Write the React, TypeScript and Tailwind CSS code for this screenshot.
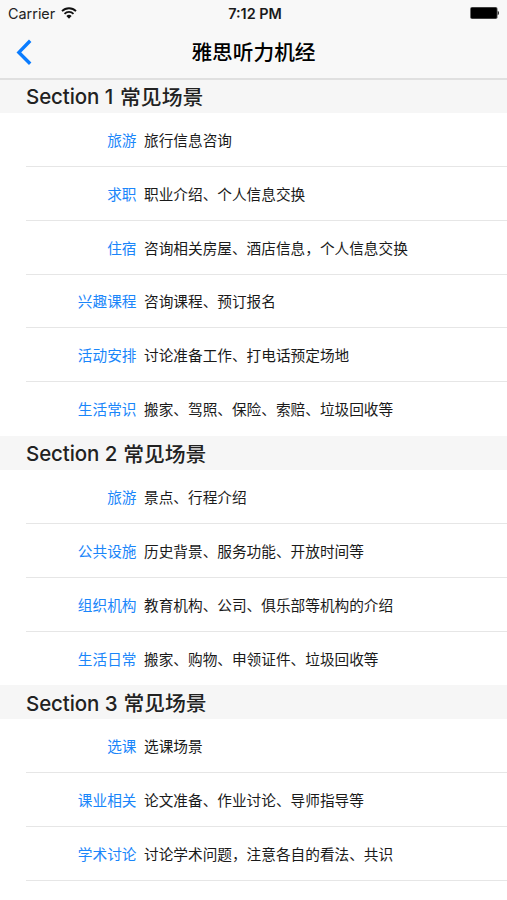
type Row = { label: string; detail: string };
type Section = { title: string; suffix: string; rows: Row[] };

const sections: Section[] = [
  {
    title: "Section 1",
    suffix: "常见场景",
    rows: [
      { label: "旅游", detail: "旅行信息咨询" },
      { label: "求职", detail: "职业介绍、个人信息交换" },
      { label: "住宿", detail: "咨询相关房屋、酒店信息，个人信息交换" },
      { label: "兴趣课程", detail: "咨询课程、预订报名" },
      { label: "活动安排", detail: "讨论准备工作、打电话预定场地" },
      { label: "生活常识", detail: "搬家、驾照、保险、索赔、垃圾回收等" },
    ],
  },
  {
    title: "Section 2",
    suffix: "常见场景",
    rows: [
      { label: "旅游", detail: "景点、行程介绍" },
      { label: "公共设施", detail: "历史背景、服务功能、开放时间等" },
      { label: "组织机构", detail: "教育机构、公司、俱乐部等机构的介绍" },
      { label: "生活日常", detail: "搬家、购物、申领证件、垃圾回收等" },
    ],
  },
  {
    title: "Section 3",
    suffix: "常见场景",
    rows: [
      { label: "选课", detail: "选课场景" },
      { label: "课业相关", detail: "论文准备、作业讨论、导师指导等" },
      { label: "学术讨论", detail: "讨论学术问题，注意各自的看法、共识" },
    ],
  },
];

function StatusBar() {
  return (
    <div className="grid h-[27px] grid-cols-3 items-center px-2">
      <div className="flex items-center gap-[6px] text-[#222]">
        <span className="text-[14.4px]">Carrier</span>
        <svg className="-mt-px" width="16" height="12" viewBox="0 0 16 12" fill="none" stroke="#111" strokeWidth="1.8">
          <path d="M1 4.1a10 10 0 0 1 14 0M3.5 6.8a6.4 6.4 0 0 1 9 0" />
          <path d="M8 11.7 5.4 9.1a3.7 3.7 0 0 1 5.2 0z" fill="#111" stroke="none" />
        </svg>
      </div>
      <span className="pl-[3px] text-center text-[14.4px] font-semibold text-[#1a1a1a]">7:12 PM</span>
      <svg className="-mt-px justify-self-end" width="30" height="12" viewBox="0 0 30 12">
        <rect x="1.2" y="0" width="27.3" height="12" rx="1.8" fill="#555" />
        <rect x="1.9" y="0.8" width="25.8" height="10.4" rx="1.2" />
        <path d="M28.6 3.8c1.9.6 1.9 3.8 0 4.4z" fill="#333" />
      </svg>
    </div>
  );
}

function NavBar() {
  return (
    <div className="grid h-[50px] grid-cols-[60px_1fr_60px] items-center">
      <button type="button" aria-label="返回" className="pl-4">
        <svg width="17" height="28" viewBox="0 0 17 28" fill="none" stroke="#0a7cff" strokeWidth="3.4">
          <path d="M14.2 2.8 2.9 14.4l11.3 11.4" />
        </svg>
      </button>
      <h1 className="pt-px text-center text-[20.7px] font-medium">雅思听力机经</h1>
    </div>
  );
}

export default function App() {
  return (
    <div className="h-[900px] overflow-hidden bg-white font-['Inter','Noto_Sans_CJK_SC',sans-serif] text-black">
      <header className="h-[80px] border-b-2 border-[#e0e0e0] bg-[#f8f8f8]">
        <StatusBar />
        <NavBar />
      </header>
      {sections.map((section) => (
        <section key={section.title} className="group">
          <h2 className="flex h-[34px] items-center gap-[6px] bg-[#f6f6f6] pl-[26px] pt-[3px] font-medium text-[#222] group-first-of-type:h-[33px] group-first-of-type:gap-[7px] group-first-of-type:pt-[2px]">
            <span className="text-[20.5px] tracking-[-0.1px]">{section.title}</span>
            <span className="text-[20.8px]">{section.suffix}</span>
          </h2>
          <ul className="group-last:[&>li]:border-[#e6e6e6]">
            {section.rows.map((row) => (
              <li
                key={row.label}
                className="ml-[26px] flex h-[53.85px] items-center border-b border-[#e6e6e6] pt-[3px] text-[14.67px] last:border-transparent"
              >
                <span className="w-[110.5px] text-right text-[#1a86fa]">{row.label}</span>
                <span className="ml-[7.5px] text-[#1a1a1a]">{row.detail}</span>
              </li>
            ))}
          </ul>
        </section>
      ))}
    </div>
  );
}
